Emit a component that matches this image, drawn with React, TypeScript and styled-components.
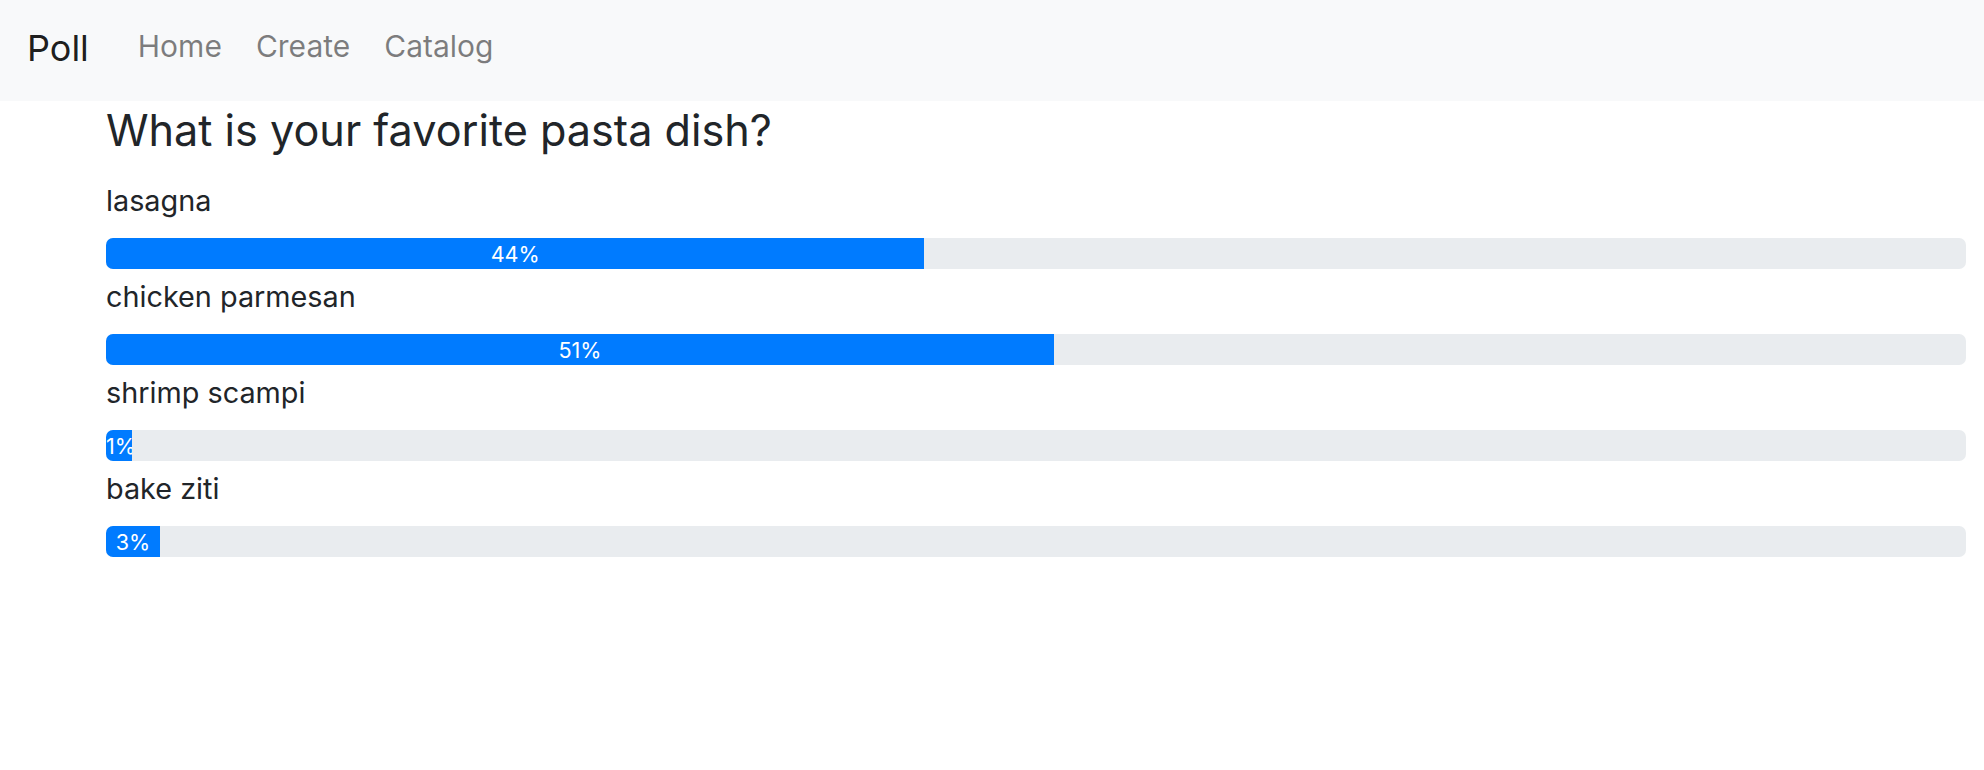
import React from 'react';
import styled, { createGlobalStyle } from 'styled-components';

const GlobalStyle = createGlobalStyle`
  html, body {
    margin: 0;
    padding: 0;
    background: #ffffff;
  }

  body {
    font-family: Inter, "Liberation Sans", Arial, sans-serif;
    color: #212529;
  }
`;

const Navbar = styled.nav`
  display: flex;
  align-items: flex-start;
  height: 101px;
  padding: 0 27px;
  background-color: #f8f9fa;
  box-sizing: border-box;
`;

const Brand = styled.a`
  margin-top: 21px;
  margin-right: 32px;
  font-size: 36px;
  line-height: 54px;
  color: rgba(0, 0, 0, 0.9);
  text-decoration: none;
`;

const NavList = styled.ul`
  display: flex;
  list-style: none;
  margin: 0;
  padding: 0;
`;

const NavLink = styled.a`
  display: block;
  margin-top: 24px;
  padding: 0 17px;
  font-size: 30px;
  line-height: 44px;
  color: rgba(0, 0, 0, 0.5);
  text-decoration: none;
`;

const Container = styled.main`
  padding: 0 18px 0 106px;
`;

const Question = styled.h4`
  margin: 3px 0 17px;
  font-size: 43.2px;
  font-weight: 400;
  line-height: 52px;
  color: #212529;
`;

const Option = styled.div`
  display: flex;
  flex-direction: column;
`;

const OptionLabel = styled.label`
  margin: 7px 0 16px;
  font-size: 28.8px;
  line-height: 42px;
`;

const Progress = styled.div`
  display: flex;
  height: 31px;
  overflow: hidden;
  font-size: 21.6px;
  background-color: #e9ecef;
  border-radius: 7px;
`;

const ProgressBar = styled.div`
  display: flex;
  flex-direction: column;
  justify-content: center;
  overflow: hidden;
  color: #ffffff;
  text-align: center;
  white-space: nowrap;
  background-color: #007bff;
`;

const options = [
  { name: 'lasagna', share: 44.0 },
  { name: 'chicken parmesan', share: 50.97 },
  { name: 'shrimp scampi', share: 1.4 },
  { name: 'bake ziti', share: 2.9 },
];

const App: React.FC = () => {
  return (
    <>
      <GlobalStyle />
      <Navbar>
        <Brand href="#">Poll</Brand>
        <NavList>
          <li>
            <NavLink href="#">Home</NavLink>
          </li>
          <li>
            <NavLink href="#">Create</NavLink>
          </li>
          <li>
            <NavLink href="#">Catalog</NavLink>
          </li>
        </NavList>
      </Navbar>
      <Container>
        <Question>What is your favorite pasta dish?</Question>
        {options.map((option) => (
          <Option key={option.name}>
            <OptionLabel>{option.name}</OptionLabel>
            <Progress>
              <ProgressBar style={{ width: `${option.share}%` }}>
                {Math.round(option.share)}%
              </ProgressBar>
            </Progress>
          </Option>
        ))}
      </Container>
    </>
  );
};

export default App;
